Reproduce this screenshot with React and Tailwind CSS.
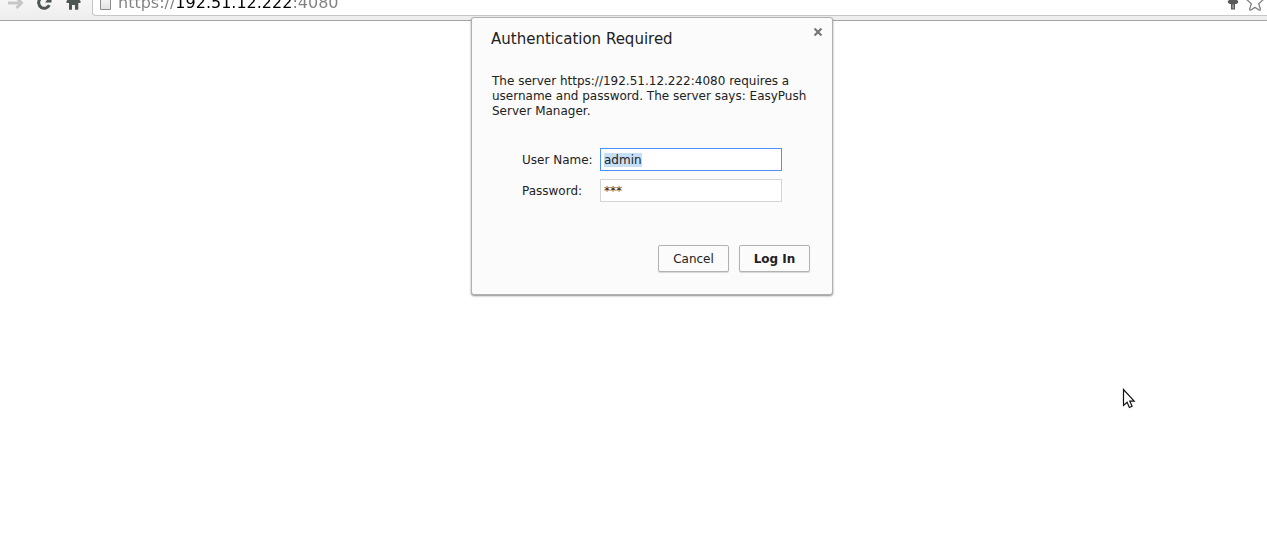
import { useEffect, useRef, useState } from 'react';

const ForwardIcon = () => (
  <svg viewBox="0 0 20 20" className="size-5" fill="none" stroke="#c6c8c6" strokeWidth="3">
    <path d="M1 11h12.5M9.5 5.5l5 5.5-5 5" />
  </svg>
);

const ReloadIcon = () => (
  <svg viewBox="0 0 20 20" className="size-5">
    <path d="M14.3 13.2a5.6 5.6 0 1 1-1-6.4" fill="none" stroke="#4d5655" strokeWidth="3" />
    <path d="M16.5 2.5v8H10z" fill="#4d5655" />
  </svg>
);

const HomeIcon = () => (
  <svg viewBox="0 0 20 20" className="size-5" fill="#4d5655">
    <path d="M10.5 2L3.5 9v2H6v6.7h3V13h3v4.7h3.3V11h2.2V9z" />
  </svg>
);

const PageIcon = () => (
  <svg viewBox="0 0 12 18" className="h-[18px] w-3">
    <defs>
      <linearGradient id="sheet" x1="0" y1="0" x2="0" y2="1">
        <stop offset="0" stopColor="#fff" />
        <stop offset="1" stopColor="#e2e2e2" />
      </linearGradient>
    </defs>
    <path d="M.5.5h7l3 4v12H.5z" fill="url(#sheet)" stroke="#8c8c8c" />
    <path d="M7.5.5v4h3" fill="none" stroke="#8c8c8c" />
  </svg>
);

const PinIcon = () => (
  <svg viewBox="0 0 12 18" className="h-[18px] w-3" fill="#5a5a5a">
    <path d="M3 0h6v6l2.2 2.2v1.3L9.5 11h-7L.8 9.500V8.200L3 6z" />
    <path d="M4 10h4v6.500H4z" />
    <path d="M5.500 11.500h1v4h-1z" fill="#c4c4c4" />
  </svg>
);

const StarIcon = () => (
  <svg viewBox="0 0 20 20" className="size-5" fill="#fff" stroke="#808080" strokeWidth="1.3" strokeLinejoin="round">
    <path d="M11 1.500l2.300 5.600 6 .5-4.600 4.200 1.700 5.500q-.2 1.200-1.400.7L11 15.400l-4 2.600q-1.200.5-1.400-.7l1.700-5.500-4.600-4.200 6-.5z" />
  </svg>
);

const CursorIcon = () => (
  <svg viewBox="0 0 14 22" className="h-[22px] w-[14px]">
    <path
      d="M1.500 1.500v16l3.600-3.300 2.300 5.300 2.700-1.200-2.300-5.100h4.400z"
      fill="#fff"
      stroke="#111"
      strokeWidth="1.2"
    />
  </svg>
);

const Toolbar = () => (
  <header className="flex h-[21px] flex-col justify-end overflow-hidden border-b border-[#a5a5a5] bg-linear-to-b from-[#f6f6f6] to-[#ededed]">
    <div className="mb-1 flex h-7 shrink-0 items-center">
      <div className="flex w-[92px] shrink-0 items-center gap-2 pl-[7px]">
        <button type="button" aria-label="Forward" disabled>
          <ForwardIcon />
        </button>
        <button type="button" aria-label="Reload">
          <ReloadIcon />
        </button>
        <button type="button" aria-label="Home">
          <HomeIcon />
        </button>
      </div>
      <div className="flex h-7 min-w-0 flex-1 items-center rounded-bl-sm border-b border-l border-[#c6c6c6] bg-white pr-[3px] pl-[7px]">
        <PageIcon />
        {/* the host is black, scheme and port are grey */}
        <input
          type="text"
          aria-label="Address"
          defaultValue="https://192.51.12.222:4080"
          spellCheck={false}
          className="ml-[6px] min-w-0 flex-1 bg-[linear-gradient(90deg,#808080_57px,#000_57px,#000_175px,#808080_175px)] bg-clip-text pt-0.5 text-base leading-5 text-transparent outline-none"
        />
        <div className="flex items-center gap-[5px]">
          <button type="button" aria-label="Saved password">
            <PinIcon />
          </button>
          <button type="button" aria-label="Bookmark this page">
            <StarIcon />
          </button>
        </div>
      </div>
    </div>
  </header>
);

const Field = ({ id, label, inputRef, value, onChange }) => (
  <div className="flex items-center">
    <label htmlFor={id} className="w-[78px] shrink-0 pt-0.5">
      {label}
    </label>
    <input
      id={id}
      ref={inputRef}
      type="text"
      autoComplete="off"
      spellCheck={false}
      value={value}
      onChange={(event) => onChange(event.target.value)}
      className="h-[23px] min-w-0 flex-1 border border-[#d4d4d4] bg-white px-[3px] outline-none selection:bg-[#c6dff8] selection:text-[#222] focus:border-[#4d90fe]"
    />
  </div>
);

const AuthDialog = () => {
  const userRef = useRef(null);
  const [user, setUser] = useState('admin');
  const [password, setPassword] = useState('***');

  useEffect(() => {
    userRef.current.focus();
    userRef.current.select();
  }, []);

  const buttonClass =
    'h-[27px] w-[71px] rounded-xs border border-[#b2b2b2] bg-[#fbfbfb] pt-0.5 shadow-[0_1px_1px_rgba(0,0,0,0.15)]';

  return (
    <form
      role="dialog"
      aria-labelledby="auth-title"
      onSubmit={(event) => event.preventDefault()}
      className="relative w-[362px] rounded-[3px] border border-[#b0b0b0] bg-[#fbfbfb] text-xs leading-[15px] text-[#222] shadow-[0_1px_2px_rgba(0,0,0,0.45)]"
    >
      <div className="flex items-start justify-between pr-[9px] pl-[19px]">
        <h1 id="auth-title" className="pt-[11px] text-[15px] leading-5">
          Authentication Required
        </h1>
        <button type="button" aria-label="Close" className="mt-[9px] p-px">
          <svg viewBox="0 0 8 8" className="size-2" stroke="#777" strokeWidth="2.2">
            <path d="M.5.5l7 7M7.5.5l-7 7" />
          </svg>
        </button>
      </div>
      <p className="mt-[25px] px-5">
        The server https://192.51.12.222:4080 requires a username and password. The server says: EasyPush Server
        Manager.
      </p>
      <div className="mt-[29px] space-y-2 px-[50px]">
        <Field id="user" label="User Name:" inputRef={userRef} value={user} onChange={setUser} />
        <Field id="password" label="Password:" value={password} onChange={setPassword} />
      </div>
      <div className="mt-[43px] flex justify-end gap-[10px] pr-[22px] pb-[22px]">
        <button type="button" className={buttonClass}>
          Cancel
        </button>
        <button type="submit" className={`${buttonClass} font-bold`}>
          Log In
        </button>
      </div>
    </form>
  );
};

const App = () => (
  <div className="min-h-screen bg-white font-['DejaVu_Sans',sans-serif]">
    <Toolbar />
    <main className="relative -mt-1 flex justify-center pl-[37px]">
      <AuthDialog />
      <div className="pointer-events-none absolute top-[371px] left-[1122px]">
        <CursorIcon />
      </div>
    </main>
  </div>
);

export default App;
